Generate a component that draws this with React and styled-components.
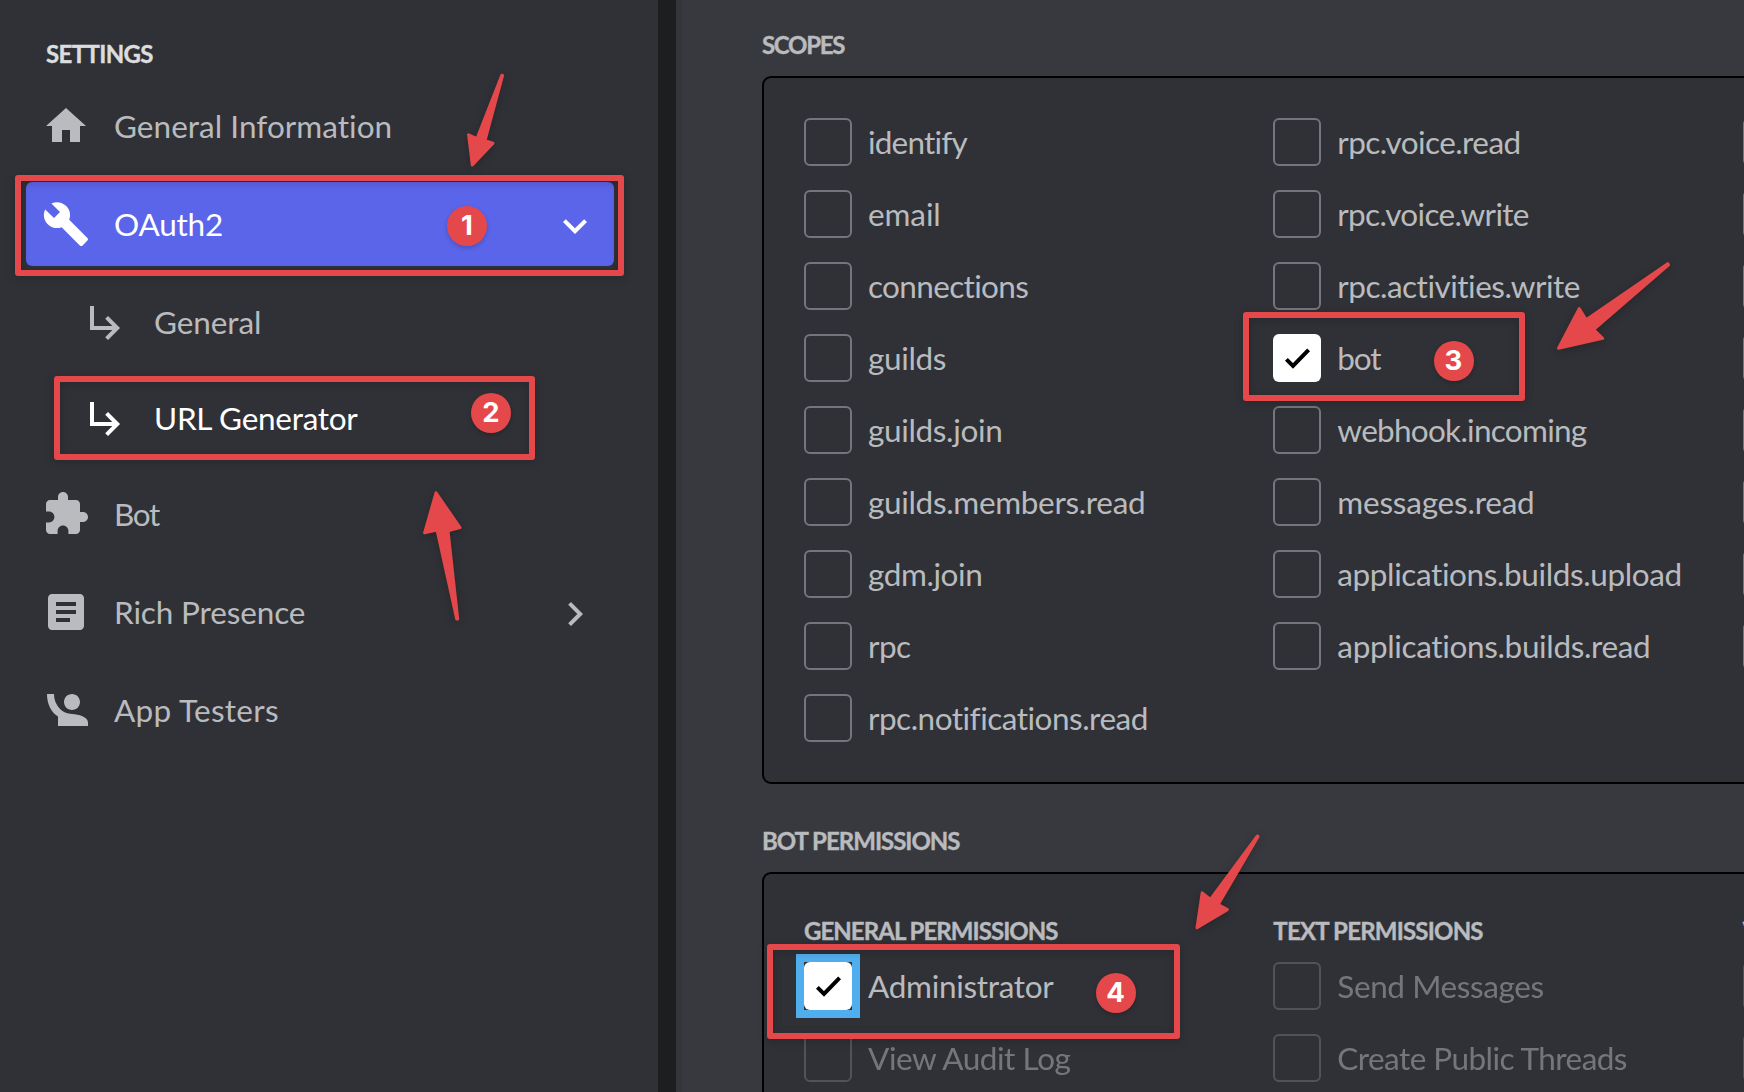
import React from "react";
import styled, { createGlobalStyle } from "styled-components";

const c = {
  sidebar: "#303136",
  main: "#38393f",
  divider: "#1d1e20",
  blurple: "#5b65ea",
  text: "#b9bbbe",
  bright: "#dcddde",
  border: "#72767d",
  red: "#e5484b",
  focus: "#50aeef",
};

const GlobalStyle = createGlobalStyle`
  html, body { margin: 0; background: ${c.sidebar}; overflow: hidden; }
  * { box-sizing: border-box; }
`;

const Page = styled.div`
  position: relative;
  display: flex;
  width: 1744px;
  height: 1092px;
  overflow: hidden;
  background: ${c.main};
  color: ${c.text};
  font-family: Lato, "Open Sans", sans-serif;
  font-size: 31.5px;
  font-variant-ligatures: none;
`;

const Sidebar = styled.nav`
  flex: none;
  display: flex;
  flex-direction: column;
  width: 658px;
  padding: 39px 44px 0 26px;
  background: ${c.sidebar};
`;

const Divider = styled.div`
  flex: none;
  width: 24px;
  background: ${c.divider};
  border-right: 6px solid #34353b;
`;

const Heading = styled.h2`
  margin: 0 0 ${(p) => p.$after ?? 16}px;
  color: ${(p) => (p.$bright ? c.bright : c.text)};
  font-size: 24px;
  font-weight: 700;
  line-height: ${(p) => p.$line ?? 30}px;
  letter-spacing: ${(p) => p.$ls}px;
  white-space: nowrap;
  -webkit-text-stroke: 0.4px currentColor;
`;

const SettingsHeading = styled(Heading)`
  padding-left: 20px;
`;

const NavList = styled.div`
  display: flex;
  flex-direction: column;
  gap: 14px;
`;

const NavGroup = styled.div`
  display: flex;
  flex-direction: column;
  gap: 12px;
`;

const NavItem = styled.a`
  display: flex;
  align-items: center;
  gap: 24px;
  height: 84px;
  padding: 0 15.5px 0 ${(p) => (p.$sub ? 56 : 16)}px;
  border-radius: 6px;
  background: ${(p) => (p.$active ? c.blurple : "transparent")};
  color: ${(p) => (p.$active || p.$selected ? "#fff" : c.text)};
`;

const NavIcon = styled.svg`
  flex: none;
  width: 48px;
  height: 48px;
  fill: currentColor;
`;

const Chevron = styled(NavIcon)`
  margin: 4px 0 0 auto;
`;

const Label = styled.span`
  line-height: 40px;
  letter-spacing: ${(p) => p.$ls}px;
  white-space: nowrap;
`;

const Main = styled.main`
  flex: none;
  width: 1572px;
  padding: 30px 0 0 80px;
`;

const Panel = styled.section`
  display: grid;
  grid-template-columns: repeat(3, 1fr);
  width: 1492px;
  margin-bottom: 42px;
  padding: 40px;
  border: 2px solid #000;
  border-radius: 9px;
  background: ${c.sidebar};
`;

const Column = styled.div`
  display: flex;
  flex-direction: column;
  gap: 24px;
  min-width: 0;
`;

const PermissionColumn = styled.div`
  display: flex;
  flex-direction: column;
  min-width: 0;
`;

const Option = styled.label`
  display: flex;
  align-items: center;
  gap: 16px;
  height: 48px;
  opacity: ${(p) => (p.$disabled ? 0.5 : 1)};
`;

const Box = styled.span`
  flex: none;
  width: 48px;
  height: 48px;
  border: ${(p) => (p.$checked ? "0" : `2px solid ${c.border}`)};
  border-radius: 6px;
  background: ${(p) => (p.$checked ? "#fff" : "transparent")};
`;

const FocusRing = styled.span`
  flex: none;
  display: flex;
  margin: -8px;
  border: 8px solid ${c.focus};
`;

const Tick = styled.svg`
  display: block;
  width: 48px;
  height: 48px;
  fill: none;
  stroke: #000;
  stroke-width: 4;
`;

const Frame = styled.div`
  position: absolute;
  left: ${(p) => p.$x}px;
  top: ${(p) => p.$y}px;
  width: ${(p) => p.$w}px;
  height: ${(p) => p.$h}px;
  border: 6px solid ${c.red};
  border-radius: 3px;
  filter: drop-shadow(0 2px 4px rgba(0, 0, 0, 0.22));
`;

const Badge = styled.div`
  position: absolute;
  left: ${(p) => p.$x}px;
  top: ${(p) => p.$y}px;
  display: flex;
  justify-content: center;
  width: 40px;
  height: 40px;
  border-radius: 50%;
  background: ${c.red};
  box-shadow: 0 2px 5px rgba(0, 0, 0, 0.2);
  color: #fff;
  font: 700 27.5px/39px Inter, sans-serif;
`;

const Arrows = styled.svg`
  position: absolute;
  inset: 0;
  width: 1744px;
  height: 1092px;
  fill: ${c.red};
  stroke: ${c.red};
  stroke-width: 3;
  stroke-linejoin: round;
  filter: drop-shadow(0 2px 4px rgba(0, 0, 0, 0.22));
`;

const icons = {
  home: "M10 20v-6h4v6h5v-8h3L12 3 2 12h3v8z",
  wrench:
    "M22.7 19l-9.1-9.1c.9-2.3.4-5-1.5-6.9-2-2-5-2.4-7.4-1.3L9 6 6 9 1.6 4.7C.4 7.1.9 10.1 2.9 12.1c1.9 1.9 4.6 2.4 6.9 1.5l9.1 9.1c.4.4 1 .4 1.4 0l2.3-2.3c.5-.4.5-1.1.1-1.4z",
  puzzle:
    "M20.5 11H19V7c0-1.1-.9-2-2-2h-4V3.5C13 2.12 11.88 1 10.5 1S8 2.12 8 3.5V5H4c-1.1 0-1.99.9-1.99 2v3.8H3.5c1.49 0 2.7 1.21 2.7 2.7s-1.21 2.7-2.7 2.7H2V20c0 1.1.9 2 2 2h3.8v-1.5c0-1.49 1.21-2.7 2.7-2.7 1.49 0 2.7 1.21 2.7 2.7V22H17c1.1 0 2-.9 2-2v-4h1.5c1.38 0 2.5-1.12 2.5-2.5S21.88 11 20.5 11z",
  article:
    "M19 3H5c-1.1 0-2 .9-2 2v14c0 1.1.9 2 2 2h14c1.1 0 2-.9 2-2V5c0-1.1-.9-2-2-2zm-5 14H7v-2h7v2zm3-4H7v-2h10v2zm0-4H7V7h10v2z",
  tester:
    "M15 12c2.21 0 4-1.79 4-4s-1.79-4-4-4-4 1.79-4 4 1.79 4 4 4zM2.5 4H6c0 5.8 4.2 9.9 9 10 3.4.1 8 1.5 8 4.2V20H8v-4.7C4.6 13.2 2.5 9.2 2.5 4z",
  down: "M16.59 8.59L12 13.17 7.41 8.59 6 10l6 6 6-6z",
  right: "M10 6L8.59 7.41 13.17 12l-4.58 4.59L10 18l6-6z",
};

const Icon = ({ name }) => (
  <NavIcon viewBox="0 0 24 24">
    <path d={icons[name]} />
  </NavIcon>
);

const SubArrow = () => (
  <NavIcon viewBox="0 0 48 48">
    <path
      d="M10 8V30H35M24.6 19.4L35.2 30L24.6 40.6"
      fill="none"
      stroke="currentColor"
      strokeWidth="4"
    />
  </NavIcon>
);

const scopes = [
  [
    ["identify", -0.8],
    ["email", -0.1],
    ["connections", -0.65],
    ["guilds", -0.35],
    ["guilds.join", -0.35],
    ["guilds.members.read", -0.33],
    ["gdm.join", -0.42],
    ["rpc", -0.56],
    ["rpc.notifications.read", -0.5],
  ],
  [
    ["rpc.voice.read", -0.58],
    ["rpc.voice.write", -0.67],
    ["rpc.activities.write", -0.5],
    ["bot", -1.21, "checked"],
    ["webhook.incoming", -0.72],
    ["messages.read", -0.22],
    ["applications.builds.upload", -0.39],
    ["applications.builds.read", -0.35],
  ],
  Array.from({ length: 8 }, () => ["", 0]),
];

const permissions = [
  {
    title: "GENERAL PERMISSIONS",
    ls: -0.95,
    options: [
      ["Administrator", -0.3, "focused"],
      ["View Audit Log", -0.45, "disabled"],
    ],
  },
  {
    title: "TEXT PERMISSIONS",
    ls: -0.8,
    options: [
      ["Send Messages", -0.4, "disabled"],
      ["Create Public Threads", -0.55, "disabled"],
    ],
  },
  {
    title: "VOICE PERMISSIONS",
    ls: -0.9,
    options: [
      ["", 0, "disabled"],
      ["", 0, "disabled"],
    ],
  },
];

const CheckedBox = () => (
  <Box $checked>
    <Tick viewBox="0 0 48 48">
      <path d="M13.4 25.4L20 31.9L35.6 15.9" />
    </Tick>
  </Box>
);

const OptionRow = ({ option: [text, ls, state] }) => (
  <Option $disabled={state === "disabled"}>
    {state === "focused" ? (
      <FocusRing>
        <CheckedBox />
      </FocusRing>
    ) : state === "checked" ? (
      <CheckedBox />
    ) : (
      <Box />
    )}
    <Label $ls={ls}>{text}</Label>
  </Option>
);

export default function App() {
  return (
    <Page>
      <GlobalStyle />
      <Sidebar>
        <SettingsHeading $bright $ls={-0.65} $after={15}>
          SETTINGS
        </SettingsHeading>
        <NavList>
          <NavItem>
            <Icon name="home" />
            <Label $ls={0.04}>General Information</Label>
          </NavItem>
          <NavItem $active>
            <Icon name="wrench" />
            <Label $ls={-0.2}>OAuth2</Label>
            <Chevron viewBox="0 0 24 24">
              <path d={icons.down} />
            </Chevron>
          </NavItem>
          <NavGroup>
            <NavItem $sub>
              <SubArrow />
              <Label $ls={-0.1}>General</Label>
            </NavItem>
            <NavItem $sub $selected>
              <SubArrow />
              <Label $ls={-0.27}>URL Generator</Label>
            </NavItem>
            <NavItem>
              <Icon name="puzzle" />
              <Label $ls={-1.4}>Bot</Label>
            </NavItem>
          </NavGroup>
          <NavItem>
            <Icon name="article" />
            <Label $ls={-0.13}>Rich Presence</Label>
            <Chevron viewBox="0 0 24 24">
              <path d={icons.right} />
            </Chevron>
          </NavItem>
          <NavItem>
            <Icon name="tester" />
            <Label $ls={0.3}>App Testers</Label>
          </NavItem>
        </NavList>
      </Sidebar>
      <Divider />
      <Main>
        <Heading $ls={-1.3}>SCOPES</Heading>
        <Panel>
          {scopes.map((column, i) => (
            <Column key={i}>
              {column.map((option, j) => (
                <OptionRow key={j} option={option} />
              ))}
            </Column>
          ))}
        </Panel>
        <Heading $ls={-1}>BOT PERMISSIONS</Heading>
        <Panel>
          {permissions.map(({ title, ls, options }) => (
            <PermissionColumn key={title}>
              <Heading $ls={ls} $line={34} $after={14}>
                {title}
              </Heading>
              <Column>
                {options.map((option, j) => (
                  <OptionRow key={j} option={option} />
                ))}
              </Column>
            </PermissionColumn>
          ))}
        </Panel>
      </Main>

      <Frame $x={15} $y={175} $w={609} $h={101} />
      <Frame $x={54} $y={376} $w={481} $h={84} />
      <Frame $x={1243} $y={312} $w={282} $h={89} />
      <Frame $x={767} $y={944} $w={413} $h={95} />
      <Arrows viewBox="0 0 1744 1092">
        <path d="M472.3 165L468.6 134.8L477 138.6L501.8 75.2L502.6 75.4L484.9 140.8L493 143.3Z" />
        <path d="M436 492.8L424.6 532.8L437 530L456.7 619L457.7 619L448 530.7L460 527.6Z" />
        <path d="M1558.5 348.2L1579.2 308.6L1586.2 319.8L1667.7 263.7L1668.5 264.8L1593.6 329.5L1602.6 338.4Z" />
        <path d="M1197 927.8L1202.2 892.8L1210.4 899.5L1257.4 836L1258.1 836.5L1218.2 904.6L1227.4 909.6Z" />
      </Arrows>
      <Badge $x={447} $y={206}>1</Badge>
      <Badge $x={471} $y={392.5}>2</Badge>
      <Badge $x={1433.5} $y={341}>3</Badge>
      <Badge $x={1095.5} $y={973}>4</Badge>
    </Page>
  );
}
